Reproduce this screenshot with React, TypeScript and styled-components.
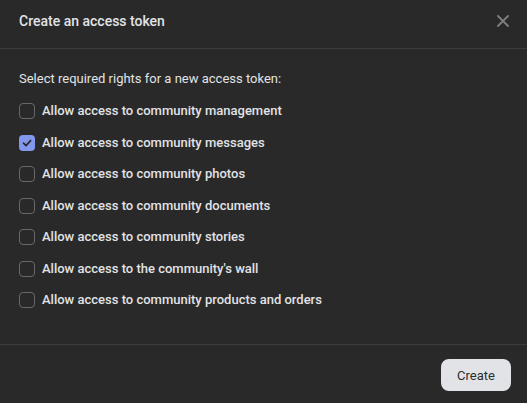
import React, { useState } from "react";
import styled, { createGlobalStyle } from "styled-components";

const Global = createGlobalStyle`
  html, body { margin: 0; padding: 0; background: #292929; }
  body { font-family: Roboto, "Liberation Sans", Arial, sans-serif; -webkit-font-smoothing: antialiased; }
`;

const Modal = styled.div`
  width: 527px;
  height: 403px;
  background: #292929;
  display: flex;
  flex-direction: column;
  box-sizing: border-box;
`;

const Header = styled.div`
  height: 49px;
  box-sizing: border-box;
  padding: 12px 17px 0 19px;
  display: flex;
  justify-content: space-between;
  align-items: flex-start;
  border-bottom: 1px solid #3d3d3d;
`;

const Title = styled.h2`
  margin: 0;
  font-size: 14px;
  line-height: 18px;
  font-weight: 500;
  color: #e1e3e6;
`;

const CloseButton = styled.button`
  background: none;
  border: none;
  padding: 0;
  margin-top: 2px;
  width: 14px;
  height: 14px;
  display: flex;
  align-items: center;
  justify-content: center;
  cursor: pointer;
`;

const Body = styled.div`
  flex: 1;
  padding: 21px 19px 0;
  display: flex;
  flex-direction: column;
`;

const Subtitle = styled.div`
  font-size: 13px;
  line-height: 18px;
  color: #e1e3e6;
  margin-bottom: 11px;
`;

const List = styled.div`
  display: flex;
  flex-direction: column;
  gap: 7.5px;
`;

const Row = styled.label`
  display: flex;
  align-items: center;
  height: 24px;
  gap: 7px;
  cursor: pointer;
`;

const Box = styled.span<{ $checked: boolean }>`
  width: 16px;
  height: 16px;
  box-sizing: border-box;
  border-radius: 4px;
  border: ${(p) => (p.$checked ? "none" : "1.5px solid #666869")};
  background: ${(p) => (p.$checked ? "#8297ee" : "transparent")};
  display: flex;
  align-items: center;
  justify-content: center;
  flex-shrink: 0;
`;

const Label = styled.span`
  font-size: 13px;
  line-height: 18px;
  color: #e1e3e6;
  font-weight: 500;
`;

const Footer = styled.div`
  border-top: 1px solid #3d3d3d;
  height: 59px;
  box-sizing: border-box;
  padding: 14px 16px 0;
  display: flex;
  justify-content: flex-end;
  align-items: flex-start;
`;

const PrimaryButton = styled.button`
  height: 32px;
  width: 70px;
  border: none;
  border-radius: 8px;
  background: #e1e3e6;
  color: #2c2d2e;
  font-family: Roboto, "Liberation Sans", Arial, sans-serif;
  font-size: 13px;
  font-weight: 400;
  cursor: pointer;
  padding: 0;
`;

const items = [
  "Allow access to community management",
  "Allow access to community messages",
  "Allow access to community photos",
  "Allow access to community documents",
  "Allow access to community stories",
  "Allow access to the community's wall",
  "Allow access to community products and orders",
];

export default function App() {
  const [checked, setChecked] = useState<boolean[]>(items.map((_, i) => i === 1));
  return (
    <>
      <Global />
      <Modal>
        <Header>
          <Title>Create an access token</Title>
          <CloseButton aria-label="Close">
            <svg width="12" height="12" viewBox="0 0 12 12">
              <path d="M1 1L11 11M11 1L1 11" stroke="#7e7f80" strokeWidth="1.8" strokeLinecap="round" />
            </svg>
          </CloseButton>
        </Header>
        <Body>
          <Subtitle>Select required rights for a new access token:</Subtitle>
          <List>
            {items.map((t, i) => (
              <Row
                key={t}
                onClick={() => setChecked((c) => c.map((v, j) => (j === i ? !v : v)))}
              >
                <Box $checked={checked[i]}>
                  {checked[i] && (
                    <svg width="12" height="12" viewBox="0 0 12 12">
                      <path d="M2.5 6.2L5 8.6L9.6 3.6" fill="none" stroke="#292929" strokeWidth="1.7" strokeLinecap="round" strokeLinejoin="round" />
                    </svg>
                  )}
                </Box>
                <Label>{t}</Label>
              </Row>
            ))}
          </List>
        </Body>
        <Footer>
          <PrimaryButton>Create</PrimaryButton>
        </Footer>
      </Modal>
    </>
  );
}
